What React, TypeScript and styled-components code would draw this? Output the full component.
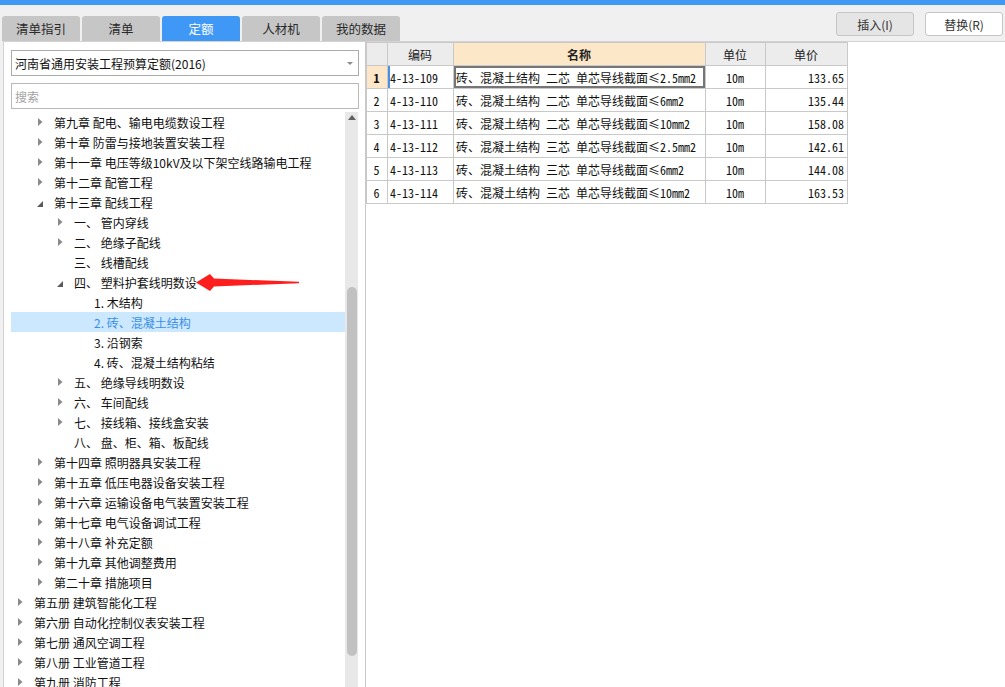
import React from "react";
import styled, { createGlobalStyle } from "styled-components";

type Arrow = "closed" | "open" | "none";

interface TreeNode {
  level: number;
  arrow: Arrow;
  text: string;
  selected?: boolean;
}

const treeData: TreeNode[] = [
  { level: 1, arrow: "closed", text: "第九章 配电、输电电缆数设工程" },
  { level: 1, arrow: "closed", text: "第十章 防雷与接地装置安装工程" },
  { level: 1, arrow: "closed", text: "第十一章 电压等级10kV及以下架空线路输电工程" },
  { level: 1, arrow: "closed", text: "第十二章 配管工程" },
  { level: 1, arrow: "open", text: "第十三章 配线工程" },
  { level: 2, arrow: "closed", text: "一、 管内穿线" },
  { level: 2, arrow: "closed", text: "二、 绝缘子配线" },
  { level: 2, arrow: "none", text: "三、 线槽配线" },
  { level: 2, arrow: "open", text: "四、 塑料护套线明数设" },
  { level: 3, arrow: "none", text: "1. 木结构" },
  { level: 3, arrow: "none", text: "2. 砖、混凝土结构", selected: true },
  { level: 3, arrow: "none", text: "3. 沿钢索" },
  { level: 3, arrow: "none", text: "4. 砖、混凝土结构粘结" },
  { level: 2, arrow: "closed", text: "五、 绝缘导线明数设" },
  { level: 2, arrow: "closed", text: "六、 车间配线" },
  { level: 2, arrow: "closed", text: "七、 接线箱、接线盒安装" },
  { level: 2, arrow: "none", text: "八、 盘、柜、箱、板配线" },
  { level: 1, arrow: "closed", text: "第十四章 照明器具安装工程" },
  { level: 1, arrow: "closed", text: "第十五章 低压电器设备安装工程" },
  { level: 1, arrow: "closed", text: "第十六章 运输设备电气装置安装工程" },
  { level: 1, arrow: "closed", text: "第十七章 电气设备调试工程" },
  { level: 1, arrow: "closed", text: "第十八章 补充定额" },
  { level: 1, arrow: "closed", text: "第十九章 其他调整费用" },
  { level: 1, arrow: "closed", text: "第二十章 措施项目" },
  { level: 0, arrow: "closed", text: "第五册 建筑智能化工程" },
  { level: 0, arrow: "closed", text: "第六册 自动化控制仪表安装工程" },
  { level: 0, arrow: "closed", text: "第七册 通风空调工程" },
  { level: 0, arrow: "closed", text: "第八册 工业管道工程" },
  { level: 0, arrow: "closed", text: "第九册 消防工程" },
];

const quotaRows = [
  ["4-13-109", "砖、混凝土结构 二芯 单芯导线截面≤2.5mm2", "10m", "133.65"],
  ["4-13-110", "砖、混凝土结构 二芯 单芯导线截面≤6mm2", "10m", "135.44"],
  ["4-13-111", "砖、混凝土结构 二芯 单芯导线截面≤10mm2", "10m", "158.08"],
  ["4-13-112", "砖、混凝土结构 三芯 单芯导线截面≤2.5mm2", "10m", "142.61"],
  ["4-13-113", "砖、混凝土结构 三芯 单芯导线截面≤6mm2", "10m", "144.08"],
  ["4-13-114", "砖、混凝土结构 三芯 单芯导线截面≤10mm2", "10m", "163.53"],
];

const tabs = ["清单指引", "清单", "定额", "人材机", "我的数据"];

const GlobalStyle = createGlobalStyle`
  html, body {
    margin: 0;
    padding: 0;
    background: #f0f0f0;
  }
  body {
    font-family: "Noto Sans CJK SC", "Microsoft YaHei", sans-serif;
    font-size: 12px;
    color: #222;
    overflow: hidden;
  }
  * {
    box-sizing: border-box;
  }
`;

const Page = styled.div`
  display: flex;
  flex-direction: column;
  height: 100vh;
`;

const TopStrip = styled.div`
  height: 5px;
  background: #3f98f6;
`;

const Header = styled.div`
  height: 36px;
  display: flex;
  justify-content: space-between;
  padding: 0 2px;
`;

const TabBar = styled.div`
  display: flex;
  gap: 2px;
  align-self: flex-end;
`;

const Tab = styled.div<{ $active?: boolean }>`
  width: 78px;
  height: 25px;
  border-radius: 3px 3px 0 0;
  background: ${(p) => (p.$active ? "#3f98f6" : "#c6c6c6")};
  color: ${(p) => (p.$active ? "#fff" : "#2a2a2a")};
  display: flex;
  align-items: center;
  justify-content: center;
  font-size: 12.5px;
`;

const ButtonGroup = styled.div`
  display: flex;
  gap: 11px;
  margin-top: 7px;
  align-self: flex-start;
`;

const ToolButton = styled.button<{ $light?: boolean }>`
  width: 78px;
  height: 24px;
  border: 1px solid #c6c6c6;
  border-radius: 3px;
  background: ${(p) => (p.$light ? "#fff" : "#e5e5e5")};
  color: #333;
  font-family: "Noto Sans CJK SC", sans-serif;
  font-size: 12px;
  padding: 0;
`;

const Main = styled.div`
  flex: 1;
  display: flex;
  min-height: 0;
`;

const LeftPanel = styled.div`
  margin-left: 3px;
  width: 363px;
  background: #fff;
  border-left: 1px solid #d2d2d2;
  border-top: 1px solid #d2d2d2;
  border-right: 1px solid #c8c8c8;
  padding: 8px 6px 0 7px;
  display: flex;
  flex-direction: column;
  overflow: hidden;
`;

const Select = styled.div`
  height: 26px;
  border: 1px solid #ababab;
  display: flex;
  align-items: center;
  justify-content: space-between;
  padding: 0 5px 0 3px;
  color: #111;
`;

const SearchInput = styled.input`
  margin-top: 7px;
  height: 26px;
  border: 1px solid #b9b9b9;
  padding: 0 3px;
  font-family: "Noto Sans CJK SC", sans-serif;
  font-size: 12px;
  outline: none;
  &::placeholder {
    color: #a3a3a3;
  }
`;

const TreeArea = styled.div`
  margin-top: 3px;
  flex: 1;
  display: flex;
  min-height: 0;
  position: relative;
`;

const TreeList = styled.div`
  flex: 1;
  overflow: hidden;
`;

const TreeRow = styled.div<{ $level: number; $selected?: boolean }>`
  height: 20px;
  display: flex;
  align-items: center;
  padding-left: ${(p) => p.$level * 20}px;
  background: ${(p) => (p.$selected ? "#cce8ff" : "transparent")};
  color: ${(p) => (p.$selected ? "#3a8ee6" : "#111")};
  white-space: nowrap;
`;

const ArrowBox = styled.span`
  width: 18px;
  height: 20px;
  display: flex;
  align-items: center;
  justify-content: center;
  flex-shrink: 0;
`;

const TreeText = styled.span`
  margin-left: 5px;
`;

const Scrollbar = styled.div`
  width: 13px;
  margin-right: 1px;
  background: #e8e8e8;
  display: flex;
  flex-direction: column;
  align-items: center;
  padding-top: 3px;
`;

const Thumb = styled.div`
  width: 10px;
  border-radius: 5px;
  background: #c1c1c1;
  flex-shrink: 0;
`;

const Annotation = styled.svg`
  position: absolute;
  left: 184px;
  top: 160px;
`;

const RightPanel = styled.div`
  flex: 1;
  background: #fff;
  border-top: 1px solid #d2d2d2;
`;

const Grid = styled.div`
  display: inline-block;
  border-left: 1px solid #c9c9c9;
  border-top: 1px solid #c9c9c9;
  font-family: "Noto Sans Mono CJK SC", "Liberation Mono", "Noto Sans CJK SC", monospace;
  font-size: 12px;
  color: #111;
`;

const GridRow = styled.div`
  display: grid;
  grid-template-columns: 21px 66px 252px 60px 82px;
`;

const Cell = styled.div<{
  $align?: "left" | "center" | "right";
  $bg?: string;
  $bold?: boolean;
  $focus?: boolean;
  $marker?: boolean;
}>`
  height: 23px;
  border-right: 1px solid #c9c9c9;
  border-bottom: 1px solid #c9c9c9;
  display: flex;
  align-items: center;
  justify-content: ${(p) =>
    p.$align === "center" ? "center" : p.$align === "right" ? "flex-end" : "flex-start"};
  padding: 0 3px 0 2px;
  white-space: nowrap;
  overflow: hidden;
  background: ${(p) => p.$bg || "#fff"};
  font-weight: ${(p) => (p.$bold ? 700 : 400)};
  box-shadow: ${(p) =>
    p.$focus ? "inset 0 0 0 2px #767676" : p.$marker ? "inset 2px 0 0 #4a90e2" : "none"};
`;

const HeadCell = styled(Cell)`
  font-family: "Noto Sans CJK SC", sans-serif;
  color: #222;
`;

const TreeArrow: React.FC<{ kind: Arrow }> = ({ kind }) => {
  if (kind === "closed") {
    return (
      <svg width="5" height="8" viewBox="0 0 5 8">
        <polygon points="0,0 4.5,4 0,8" fill="#8a8a8a" />
      </svg>
    );
  }
  if (kind === "open") {
    return (
      <svg width="6" height="6" viewBox="0 0 6 6" style={{ marginTop: 3 }}>
        <polygon points="6,0 6,6 0,6" fill="#5a5a5a" />
      </svg>
    );
  }
  return null;
};

const App: React.FC = () => {
  return (
    <Page>
      <GlobalStyle />
      <TopStrip />
      <Header>
        <TabBar>
          {tabs.map((t) => (
            <Tab key={t} $active={t === "定额"}>
              {t}
            </Tab>
          ))}
        </TabBar>
        <ButtonGroup>
          <ToolButton>插入(I)</ToolButton>
          <ToolButton $light>替换(R)</ToolButton>
        </ButtonGroup>
      </Header>
      <Main>
        <LeftPanel>
          <Select>
            <span>河南省通用安装工程预算定额(2016)</span>
            <svg width="6" height="3" viewBox="0 0 6 3">
              <polygon points="0,0 6,0 3,3" fill="#8a8a8a" />
            </svg>
          </Select>
          <SearchInput placeholder="搜索" />
          <TreeArea>
            <TreeList>
              {treeData.map((n, i) => (
                <TreeRow key={i} $level={n.level} $selected={n.selected}>
                  <ArrowBox>
                    <TreeArrow kind={n.arrow} />
                  </ArrowBox>
                  <TreeText>{n.text}</TreeText>
                </TreeRow>
              ))}
            </TreeList>
            <Scrollbar>
              <svg width="8" height="5" viewBox="0 0 8 5">
                <polygon points="0,5 4,0 8,5" fill="#606060" />
              </svg>
              <Thumb style={{ marginTop: 167, height: 369 }} />
            </Scrollbar>
            <Annotation width="106" height="22" viewBox="0 0 106 22">
              <polygon
                points="1,10.5 15,2 19,6.5 104,9.8 104,11.2 19,14.5 15,19"
                fill="#ff1e1e"
              />
            </Annotation>
          </TreeArea>
        </LeftPanel>
        <RightPanel>
          <Grid>
            <GridRow>
              <HeadCell $bg="#ececec" />
              <HeadCell $bg="#ececec" $align="center">
                编码
              </HeadCell>
              <HeadCell $bg="#fde7c9" $align="center" $bold>
                名称
              </HeadCell>
              <HeadCell $bg="#ececec" $align="center">
                单位
              </HeadCell>
              <HeadCell $bg="#ececec" $align="center">
                单价
              </HeadCell>
            </GridRow>
            {quotaRows.map((r, i) => (
              <GridRow key={r[0]}>
                <Cell
                  $align="center"
                  $bg={i === 0 ? "#fde7c9" : "#fff"}
                  $bold={i === 0}
                >
                  {i + 1}
                </Cell>
                <Cell $marker={i === 0}>{r[0]}</Cell>
                <Cell $focus={i === 0}>{r[1]}</Cell>
                <Cell $align="center">{r[2]}</Cell>
                <Cell $align="right">{r[3]}</Cell>
              </GridRow>
            ))}
          </Grid>
        </RightPanel>
      </Main>
    </Page>
  );
};

export default App;
